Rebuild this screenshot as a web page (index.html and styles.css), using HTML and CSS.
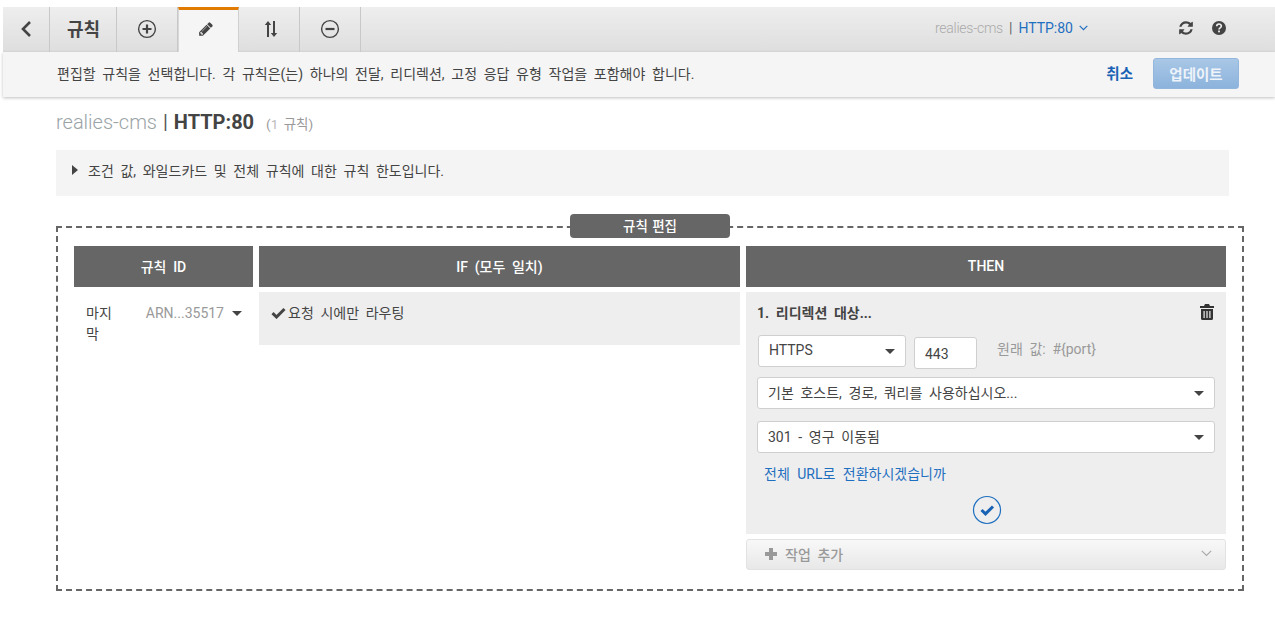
FILE: index.html
```html
<!DOCTYPE html>
<html lang="ko">
<head>
<meta charset="utf-8">
<title>규칙 편집</title>
<link rel="stylesheet" href="styles.css">
</head>
<body>
<div class="chrome">
  <div class="tabs">
    <div class="tab tab-back"><svg width="14" height="18" viewBox="0 0 14 18"><path d="M11 2 4 9l7 7" fill="none" stroke="#444" stroke-width="2.6"/></svg></div>
    <div class="tab tab-title">규칙</div>
    <div class="tab tab-icon tab-add"><svg width="20" height="20" viewBox="0 0 20 20"><circle cx="10" cy="10" r="8.4" fill="none" stroke="#444" stroke-width="1.4"/><path d="M10 5.5v9M5.5 10h9" stroke="#444" stroke-width="2.2"/></svg></div>
    <div class="tab tab-icon tab-active"><svg width="16" height="16" viewBox="0 0 1792 1792"><path d="M491 1536l91-91-235-235-91 91v107h128v128h107zm523-928q0-22-22-22-10 0-17 7l-542 542q-7 7-7 17 0 22 22 22 10 0 17-7l542-542q7-7 7-17zm-54-192l416 416-832 832h-416v-416zm683 96q0 53-37 90l-166 166-416-416 166-165q36-38 90-38 53 0 91 38l235 234q37 39 37 91z" fill="#444"/></svg></div>
    <div class="tab tab-icon"><svg width="14" height="18" viewBox="0 0 14 18"><path d="M4 1 .8 5h2.2v12h2V5h2.2zM10 17l3.200-4H11V1H9v12H6.800z" fill="#444"/></svg></div>
    <div class="tab tab-icon tab-remove"><svg width="20" height="20" viewBox="0 0 20 20"><circle cx="10" cy="10" r="8.4" fill="none" stroke="#444" stroke-width="1.4"/><path d="M5.500 10h9" stroke="#444" stroke-width="2.2"/></svg></div>
  </div>
  <div class="crumb"><span class="crumb-name">realies-cms</span><span class="crumb-sep">|</span><span class="crumb-link">HTTP:80</span><svg class="crumb-caret" width="9" height="6" viewBox="0 0 9 6"><path d="M.7.8l3.800 3.800L8.300.8" fill="none" stroke="#1f6fc0" stroke-width="1.200"/></svg></div>
  <div class="tools">
    <svg width="16" height="16" viewBox="0 0 1792 1792"><path d="M1639 1056q0 5-1 7-64 268-268 434.500t-478 166.500q-146 0-282.500-55t-243.500-157l-129 129q-19 19-45 19t-45-19-19-45v-448q0-26 19-45t45-19h448q26 0 45 19t19 45-19 45l-137 137q71 66 161 102t187 36q134 0 250-65t186-179q11-17 53-117 8-23 30-23h192q13 0 22.500 9.500t9.500 22.500zm25-800v448q0 26-19 45t-45 19h-448q-26 0-45-19t-19-45 19-45l138-138q-148-137-349-137-134 0-250 65t-186 179q-11 17-53 117-8 23-30 23h-199q-13 0-22.500-9.500t-9.500-22.500v-7q65-268 270-434.500t480-166.500q146 0 284 55.500t245 156.500l130-129q19-19 45-19t45 19 19 45z" fill="#444"/></svg>
    <svg width="14" height="14" viewBox="0 0 14 14"><circle cx="7" cy="7" r="7" fill="#444"/><path d="M4.700 5.300c0-3 4.700-3 4.700-.2 0 1.800-2.400 1.600-2.400 3.300" fill="none" stroke="#f0f0f0" stroke-width="1.600"/><rect x="6.100" y="9.500" width="1.800" height="1.800" fill="#f0f0f0"/></svg>
  </div>
</div>
<div class="actionbar">
  <p class="hint">편집할 규칙을 선택합니다. 각 규칙은(는) 하나의 전달, 리디렉션, 고정 응답 유형 작업을 포함해야 합니다.</p>
  <a class="cancel">취소</a>
  <button class="update">업데이트</button>
</div>
<main class="content">
  <h1 class="heading"><span class="h-name">realies-cms</span> <span class="h-sep">|</span> <strong>HTTP:80</strong> <small>(<i>1</i> 규칙)</small></h1>
  <div class="notice"><span class="arrow"></span>조건 값, 와일드카드 및 전체 규칙에 대한 규칙 한도입니다.</div>
  <section class="editor">
    <div class="legend">규칙 편집</div>
    <div class="rules">
      <div class="th">규칙 ID</div>
      <div class="th">IF (모두 일치)</div>
      <div class="th">THEN</div>
      <div class="idcell">
        <span class="prio">마지막</span>
        <span class="arn">ARN...35517</span>
        <span class="caret"></span>
      </div>
      <div class="ifcell">
        <svg width="15" height="12" viewBox="0 0 15 12"><path d="M1.500 6.200 5.500 10l8-8" fill="none" stroke="#444" stroke-width="3"/></svg>
        <span>요청 시에만 라우팅</span>
      </div>
      <div class="thencol">
        <div class="thencell">
          <div class="action-head">
            <strong>1. 리디렉션 대상...</strong>
            <svg width="14" height="16" viewBox="0 0 14 16"><path d="M5 0h4l1 2h4v2H0V2h4zM1 5h12v9.500a1.500 1.500 0 0 1-1.500 1.500h-9A1.500 1.500 0 0 1 1 14.500zm2.500 2v7h1.200V7zm2.900 0v7h1.200V7zm2.900 0v7h1.200V7z" fill="#333" fill-rule="evenodd"/></svg>
          </div>
          <div class="proto-row">
            <div class="select select-proto">HTTPS<span class="caret"></span></div>
            <div class="port">443</div>
            <span class="orig">원래 값: #{port}</span>
          </div>
          <div class="select select-wide">기본 호스트, 경로, 쿼리를 사용하십시오...<span class="caret"></span></div>
          <div class="select select-wide select-status">301 - 영구 이동됨<span class="caret"></span></div>
          <a class="switch">전체 URL로 전환하시겠습니까</a>
          <div class="confirm"><svg width="30" height="30" viewBox="0 0 30 30"><circle cx="15" cy="15" r="13.500" fill="none" stroke="#1f6fc0" stroke-width="1.200"/><path d="M9.500 15l4 3.800 7.500-7.300" fill="none" stroke="#1a62b4" stroke-width="3"/></svg></div>
        </div>
        <div class="add">
          <svg width="14" height="14" viewBox="0 0 14 14"><path d="M5 1h4v4h4v4H9v4H5V9H1V5h4z" fill="#999"/></svg>
          <span>작업 추가</span>
          <svg class="add-caret" width="11" height="7" viewBox="0 0 11 7"><path d="M.8.8l4.700 4.700L10.200.8" fill="none" stroke="#aaa" stroke-width="1.200"/></svg>
        </div>
      </div>
    </div>
  </section>
</main>
</body>
</html>
```
FILE: styles.css
```css
* { box-sizing: border-box; }
html, body { margin: 0; padding: 0; background: #fff; }
body {
  width: 1275px;
  height: 627px;
  overflow: hidden;
  padding-top: 7px;
  font-family: Roboto, "Noto Sans CJK KR", sans-serif;
  font-size: 14px;
  word-spacing: 3.2px;
  color: #444;
}
.chrome {
  margin-left: 3px;
  height: 45px;
  display: flex;
  align-items: stretch;
  background: linear-gradient(#eeeeee, #dedede);
}
.tabs { display: flex; align-items: stretch; }
.tab {
  display: flex;
  align-items: center;
  justify-content: center;
  margin-right: 3px;
  border-right: 1px solid #c8c8c8;
}
.tab-back { width: 47px; padding-bottom: 1px; }
.tab-title { width: 64px; font-size: 18px; font-weight: 700; color: #444; padding: 0 2px 3px 0; }
.tab-icon { width: 58px; padding-bottom: 1px; }
.tab-add { padding-right: 3px; }
.tab-remove { padding-right: 4px; }
.tab-active {
  width: 61px;
  margin-left: -3px;
  padding: 0 5px 4px 0;
  background: #f5f5f5;
  border-top: 3px solid #e07b00;
  border-left: 1px solid #d8d8d8;
  border-right: 1px solid #d0d0d0;
}
.crumb {
  margin-left: 571px;
  display: flex;
  align-items: center;
  font-size: 14px;
  padding-bottom: 3px;
}
.crumb-name { color: #aaa; font-weight: 300; letter-spacing: -.25px; }
.crumb-sep { margin: 0 6px; color: #666; }
.crumb-link { color: #1f6fc0; }
.crumb-caret { margin-left: 6px; }
.tools { margin-left: 90px; display: flex; align-items: center; gap: 18px; padding-bottom: 3px; }
.actionbar {
  margin-left: 3px;
  height: 45px;
  background: #f5f5f5;
  display: flex;
  align-items: center;
  padding: 0 36px 0 54px;
  box-shadow: 0 1px 3px rgba(0, 0, 0, .25);
}
.hint { margin: 0; flex: 1; font-size: 14px; color: #444; padding-bottom: 4px; }
.cancel { color: #1a62b4; font-weight: 700; font-size: 14.500px; margin-right: 20px; padding-bottom: 4px; }
.update {
  width: 86px;
  height: 31px;
  margin-bottom: 3px;
  border: 1px solid #93b6dd;
  border-radius: 3px;
  background: linear-gradient(#a9c7e6, #8cb3dc);
  color: #eef4fa;
  font: 700 14.500px Roboto, "Noto Sans CJK KR", sans-serif;
}
.content { padding: 0 31px 0 56px; }
.heading {
  margin: 12px 0 15px;
  height: 26px;
  line-height: 26px;
  font-size: 20px;
  font-weight: 400;
  word-spacing: 1px;
  color: #444;
}
.h-name { color: #9aa3a6; font-weight: 300; }
.h-sep { color: #555; }
.heading strong { font-weight: 700; color: #444; }
.heading small { margin-left: 6px; font-size: 13.500px; color: #9a9a9a; word-spacing: 2px; }
.heading i { font-style: normal; color: #bbb; }
.notice {
  width: 1173px;
  height: 46px;
  background: #f4f4f4;
  display: flex;
  align-items: center;
  padding: 0 0 6px 16px;
  font-size: 14px;
  color: #444;
}
.arrow {
  width: 0;
  height: 0;
  margin-right: 10px;
  border-left: 6px solid #444;
  border-top: 5px solid transparent;
  border-bottom: 5px solid transparent;
}
.editor {
  position: relative;
  width: 1188px;
  height: 365px;
  margin-top: 30px;
  padding: 18px 16px 0;
  border: 2px dashed #666;
}
.legend {
  position: absolute;
  left: 512px;
  top: -14px;
  width: 160px;
  height: 24px;
  border-radius: 4px;
  background: #666;
  color: #fff;
  font-size: 13.500px;
  font-weight: 500;
  word-spacing: 1px;
  text-align: center;
  line-height: 24px;
}
.rules {
  display: grid;
  grid-template-columns: 179px 481px 480px;
  grid-template-rows: 41px auto;
  column-gap: 6px;
  row-gap: 5px;
  align-items: start;
}
.th {
  height: 41px;
  background: #666;
  color: #fff;
  font-size: 14px;
  font-weight: 500;
  padding-bottom: 2px;
  display: flex;
  align-items: center;
  justify-content: center;
}
.idcell { display: flex; align-items: flex-start; padding: 11px 11px 0 12px; line-height: 21px; }
.prio { width: 32px; margin-right: 28px; font-size: 14px; word-break: break-all; color: #444; }
.arn { color: #999; font-size: 14px; white-space: nowrap; }
.idcell .caret { margin: 8px 0 0 8px; }
.caret {
  display: inline-block;
  width: 0;
  height: 0;
  border-top: 5px solid #444;
  border-left: 5px solid transparent;
  border-right: 5px solid transparent;
}
.ifcell {
  height: 53px;
  background: #eeeeee;
  display: flex;
  align-items: flex-start;
  gap: 2px;
  padding: 12px 12px;
  font-size: 14px;
  line-height: 18px;
}
.ifcell svg { margin-top: 3px; }
.thencell { background: #eeeeee; height: 242px; padding: 11px 11px 0 12px; }
.action-head { display: flex; justify-content: space-between; align-items: center; height: 18px; padding-right: 1px; color: #444; }
.action-head strong { font-size: 14px; font-weight: 700; margin-left: -1px; }
.proto-row { display: flex; align-items: flex-start; margin-top: 14px; height: 34px; }
.select {
  position: relative;
  display: flex;
  align-items: center;
  justify-content: space-between;
  height: 32px;
  background: #fff;
  border: 1px solid #cfcfcf;
  border-radius: 3px;
  padding: 0 10px 3px;
  font-size: 14px;
  color: #444;
}
.select .caret { margin-top: 3px; }
.select-proto { width: 148px; }
.port {
  width: 63px;
  height: 32px;
  margin: 2px 0 0 8px;
  background: #fff;
  border: 1px solid #cfcfcf;
  border-radius: 3px;
  padding: 0 10px;
  line-height: 32px;
  font-size: 14px;
  color: #444;
}
.orig { margin-left: 20px; font-size: 14px; line-height: 28px; color: #999; }
.select-wide { width: 458px; margin: 8px 0 0 -1px; }
.select-status { margin-top: 12px; }
.switch { display: block; margin: 11px 0 0 6px; font-size: 14px; line-height: 20px; word-spacing: 4px; color: #1f6fc0; }
.confirm { display: flex; justify-content: center; margin-top: 11px; }
.add {
  display: flex;
  align-items: center;
  height: 31px;
  margin-top: 5px;
  padding: 0 13px 2px 17px;
  border: 1px solid #e2e2e2;
  border-radius: 3px;
  background: linear-gradient(#f8f8f8, #e8e8e8);
  color: #999;
  font-size: 14px;
  font-weight: 500;
}
.add span { margin-left: 7px; }
.add-caret { margin-left: auto; }
```
